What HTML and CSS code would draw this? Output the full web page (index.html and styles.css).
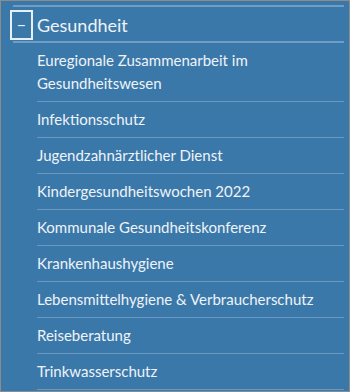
FILE: index.html
```html
<!DOCTYPE html>
<html lang="de">
<head>
  <meta charset="UTF-8">
  <title>Gesundheit</title>
  <link rel="stylesheet" href="styles.css">
</head>
<body>

<div class="panel">
  <div class="prev"></div>

  <div class="group">
    <span class="toggle">&minus;</span>
    <span class="group-title">Gesundheit</span>
  </div>

  <ul class="sub">
    <li>Euregionale Zusammenarbeit im Gesundheitswesen</li>
    <li>Infektionsschutz</li>
    <li>Jugendzahnärztlicher Dienst</li>
    <li>Kindergesundheitswochen 2022</li>
    <li>Kommunale Gesundheitskonferenz</li>
    <li>Krankenhaushygiene</li>
    <li>Lebensmittelhygiene &amp; Verbraucherschutz</li>
    <li>Reiseberatung</li>
    <li>Trinkwasserschutz</li>
  </ul>
</div>

</body>
</html>
```

FILE: styles.css
```css
body {
  margin: 0;
  font-family: Lato, 'Open Sans', sans-serif;
}

.panel {
  width: 350px;
  height: 392px;
  box-sizing: border-box;
  border: 1px solid #8c8c8c;
  background: #3b78aa;
  padding: 4px 5px 0 12px;
  overflow: hidden;
  color: #eef3f8;
}

.prev {
  border-bottom: 2px solid #6f9dc6;
}

.group {
  display: flex;
  align-items: center;
  height: 34px;
  border-bottom: 2px solid #6f9dc6;
}

.toggle {
  box-sizing: border-box;
  width: 23px;
  height: 30px;
  margin-left: -3px;
  margin-top: 2px;
  border: 2px solid #e8eff6;
  display: flex;
  align-items: center;
  justify-content: center;
  font-size: 16px;
  line-height: 1;
}

.group-title {
  margin-left: 4px;
  font-size: 18px;
  margin-top: 1px;
}

.sub {
  list-style: none;
  margin: 0 0 0 24px;
  padding: 0;
}

.sub li {
  font-size: 15px;
  line-height: 23px;
  padding: 6px 0;
  border-bottom: 1px solid #6a98c1;
}
```
